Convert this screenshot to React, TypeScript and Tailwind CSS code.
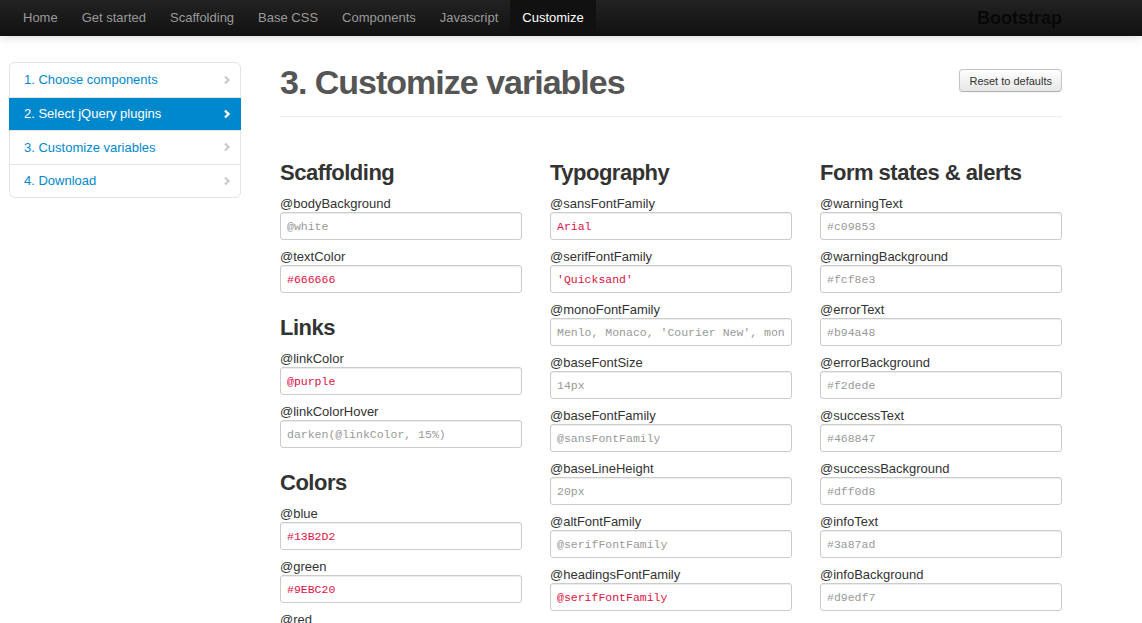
import React from 'react';

type Field = { name: string; value?: string; placeholder?: string };
type Section = { title: string; fields: Field[] };

const navItems = ['Home', 'Get started', 'Scaffolding', 'Base CSS', 'Components', 'Javascript', 'Customize'];

const steps = ['1. Choose components', '2. Select jQuery plugins', '3. Customize variables', '4. Download'];

const columns: Section[][] = [
  [
    {
      title: 'Scaffolding',
      fields: [
        { name: '@bodyBackground', placeholder: '@white' },
        { name: '@textColor', value: '#666666' },
      ],
    },
    {
      title: 'Links',
      fields: [
        { name: '@linkColor', value: '@purple' },
        { name: '@linkColorHover', placeholder: 'darken(@linkColor, 15%)' },
      ],
    },
    {
      title: 'Colors',
      fields: [
        { name: '@blue', value: '#13B2D2' },
        { name: '@green', value: '#9EBC20' },
        { name: '@red', placeholder: '#9d261d' },
        { name: '@yellow', placeholder: '#ffc40d' },
      ],
    },
  ],
  [
    {
      title: 'Typography',
      fields: [
        { name: '@sansFontFamily', value: 'Arial' },
        { name: '@serifFontFamily', value: "'Quicksand'" },
        { name: '@monoFontFamily', placeholder: "Menlo, Monaco, 'Courier New', monospace" },
        { name: '@baseFontSize', placeholder: '14px' },
        { name: '@baseFontFamily', placeholder: '@sansFontFamily' },
        { name: '@baseLineHeight', placeholder: '20px' },
        { name: '@altFontFamily', placeholder: '@serifFontFamily' },
        { name: '@headingsFontFamily', value: '@serifFontFamily' },
      ],
    },
  ],
  [
    {
      title: 'Form states & alerts',
      fields: [
        { name: '@warningText', placeholder: '#c09853' },
        { name: '@warningBackground', placeholder: '#fcf8e3' },
        { name: '@errorText', placeholder: '#b94a48' },
        { name: '@errorBackground', placeholder: '#f2dede' },
        { name: '@successText', placeholder: '#468847' },
        { name: '@successBackground', placeholder: '#dff0d8' },
        { name: '@infoText', placeholder: '#3a87ad' },
        { name: '@infoBackground', placeholder: '#d9edf7' },
      ],
    },
  ],
];

function Chevron({ active }: { active: boolean }) {
  return (
    <svg width="8" height="10" viewBox="0 0 8 10" className={active ? 'text-white' : 'text-[#cccccc]'}>
      <path d="M2 1.5 L5.5 5 L2 8.5" fill="none" stroke="currentColor" strokeWidth="2.4" />
    </svg>
  );
}

export default function App() {
  return (
    <div className="h-[623px] overflow-hidden bg-white font-['Liberation_Sans',Arial,sans-serif] text-[13px] text-[#333]">
      {/* navbar */}
      <div className="relative z-10 h-[36px] bg-gradient-to-b from-[#222222] to-[#111111] shadow-[0_1px_10px_rgba(0,0,0,0.15)]">
        <div className="flex h-full items-start justify-between pl-[11px] pr-[80px]">
          <ul className="flex">
            {navItems.map((item) => (
              <li
                key={item}
                className={
                  item === 'Customize'
                    ? 'h-[36px] bg-[#111111] px-[12px] leading-[36px] text-white'
                    : 'h-[36px] px-[12px] leading-[36px] text-[#999999]'
                }
              >
                {item}
              </li>
            ))}
          </ul>
          <span className="text-[18px] font-bold leading-[36px] text-[#080808]">Bootstrap</span>
        </div>
      </div>

      <div className="flex pt-[26px]">
        {/* sidebar */}
        <div className="ml-[9px] w-[232px] shrink-0">
          <ul className="rounded-[6px] border border-[#e5e5e5] bg-white">
            {steps.map((step, i) => {
              const active = i === 1;
              return (
                <li
                  key={step}
                  className={
                    (i > 0 ? 'border-t border-[#e5e5e5] ' : '') +
                    (active
                      ? 'relative -mx-px flex h-[33.5px] items-center justify-between bg-[#0088cc] pl-[15px] pr-[10px] text-white'
                      : 'flex h-[33.5px] items-center justify-between pl-[14px] pr-[9px] text-[#0088cc]')
                  }
                >
                  <span>{step}</span>
                  <Chevron active={active} />
                </li>
              );
            })}
          </ul>
        </div>

        {/* main */}
        <div className="ml-[39px] w-[782px] shrink-0">
          <div className="flex items-start justify-between border-b border-[#eeeeee] pb-[14px]">
            <h1 className="text-[34px] font-bold leading-[40px] tracking-[-1px] text-[#555555]">3. Customize variables</h1>
            <button className="mt-[7px] h-[23px] rounded-[4px] border border-[#c5c5c5] border-b-[#b3b3b3] bg-gradient-to-b from-white to-[#e6e6e6] px-[9px] text-[11px] leading-[20px] text-[#333] shadow-[inset_0_1px_0_rgba(255,255,255,0.2),0_1px_2px_rgba(0,0,0,0.05)]">
              Reset to defaults
            </button>
          </div>

          <div className="grid grid-cols-3 gap-x-[28px] pt-[28px]">
            {columns.map((sections, ci) => (
              <div key={ci}>
                {sections.map((section) => (
                  <div key={section.title} className="pt-[13px]">
                    <h3 className="mb-[6px] text-[22px] font-bold leading-[30px] tracking-[-0.5px] text-[#333]">
                      {section.title}
                    </h3>
                    {section.fields.map((f) => (
                      <div key={f.name} className="pb-[7px]">
                        <label className="block pt-[1px] leading-[17px]">{f.name}</label>
                        <input
                          readOnly
                          defaultValue={f.value}
                          placeholder={f.placeholder}
                          className="block h-[28px] w-full rounded-[3px] border border-[#cccccc] px-[6px] font-['Liberation_Mono','Courier_New',monospace] text-[11.5px] text-[#dd1144] shadow-[inset_0_1px_1px_rgba(0,0,0,0.075)] outline-none placeholder:text-[#999999]"
                        />
                      </div>
                    ))}
                  </div>
                ))}
              </div>
            ))}
          </div>
        </div>
      </div>
    </div>
  );
}
